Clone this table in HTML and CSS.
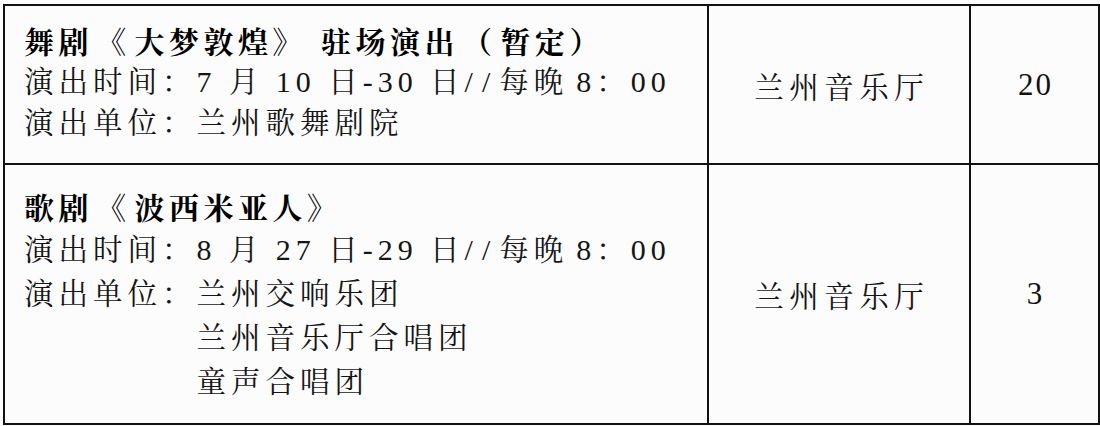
FILE: index.html
```html
<!DOCTYPE html>
<html lang="zh-CN">
<head>
<meta charset="utf-8">
<title>演出安排</title>
<link rel="stylesheet" href="styles.css">
</head>
<body>
<table class="schedule">
  <colgroup>
    <col class="col-info">
    <col class="col-venue">
    <col class="col-count">
  </colgroup>
  <tbody>
    <tr class="row row-first">
      <td class="cell info">
        <div class="title">舞剧<span class="bk-open">《</span>大梦敦煌<span class="bk-close">》</span>驻场演出<span class="bk-open">（</span>暂定）</div>
        <div class="line">演出时间：<span class="n">7</span> 月 <span class="n">10</span> 日<span class="n">-30</span> 日<span class="n slash">//</span>每晚<span class="n gap">8</span>：<span class="n">00</span></div>
        <div class="line">演出单位：兰州歌舞剧院</div>
      </td>
      <td class="cell venue">兰州音乐厅</td>
      <td class="cell count">20</td>
    </tr>
    <tr class="row row-second">
      <td class="cell info">
        <div class="title">歌剧<span class="bk-open">《</span>波西米亚人》</div>
        <div class="line">演出时间：<span class="n">8</span> 月 <span class="n">27</span> 日<span class="n">-29</span> 日<span class="n slash">//</span>每晚<span class="n gap">8</span>：<span class="n">00</span></div>
        <div class="line">演出单位：兰州交响乐团</div>
        <div class="line indent">兰州音乐厅合唱团</div>
        <div class="line indent">童声合唱团</div>
      </td>
      <td class="cell venue">兰州音乐厅</td>
      <td class="cell count">3</td>
    </tr>
  </tbody>
</table>
</body>
</html>
```

FILE: styles.css
```css
html, body {
  margin: 0;
  padding: 0;
  background: #fcfcfd;
}

body {
  padding: 4px 0 0 3px;
  font-family: "Noto Serif CJK SC", serif;
  color: #111;
}

.schedule {
  border-collapse: collapse;
  table-layout: fixed;
  width: 1095px;
}

.col-info { width: 704px; }
.col-venue { width: 262px; }
.col-count { width: 129px; }

.cell {
  border: 2px solid #111;
  padding: 0;
  vertical-align: middle;
}

.row-first { height: 159px; }
.row-second { height: 260px; }

.info {
  padding-left: 19px;
}

.row-first .info {
  padding-bottom: 6px;
}

.title {
  font-family: "Noto Serif CJK SC", serif;
  font-weight: 700;
  font-size: 30px;
  letter-spacing: 4.5px;
  line-height: 41px;
  color: #000;
  white-space: nowrap;
}

.bk-open {
  margin-left: 3px;
  margin-right: 4px;
}

.bk-close {
  margin-right: 14px;
}

.line {
  font-family: "Liberation Serif", "Noto Serif CJK SC", serif;
  font-size: 29.5px;
  font-weight: 400;
  letter-spacing: 5px;
  line-height: 41px;
  white-space: nowrap;
  color: #151515;
}

.row-second .title,
.row-second .line {
  line-height: 44px;
}

.n {
  font-family: "Liberation Serif", serif;
  font-size: 30px;
  letter-spacing: 5px;
}

.slash {
  letter-spacing: 9px;
}

.gap {
  margin-left: 8px;
}

.indent {
  padding-left: 172.5px;
}

.venue {
  text-align: center;
  font-family: "Noto Serif CJK SC", serif;
  font-size: 29.5px;
  letter-spacing: 5.5px;
  text-indent: 5.5px;
  color: #151515;
}

.count {
  text-align: center;
  font-family: "Liberation Serif", serif;
  font-size: 31px;
  letter-spacing: 2px;
  text-indent: 2px;
}
```
